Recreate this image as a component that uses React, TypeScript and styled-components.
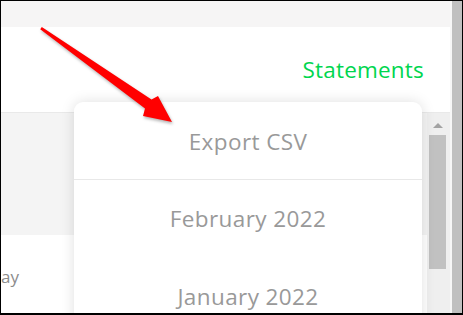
import React from "react";
import styled, { createGlobalStyle } from "styled-components";

const GlobalStyle = createGlobalStyle`
  html, body {
    margin: 0;
    padding: 0;
    background: #ffffff;
  }
  * {
    box-sizing: border-box;
  }
`;

const Frame = styled.div`
  position: relative;
  width: 463px;
  height: 315px;
  border: 1px solid #000;
  border-bottom-width: 2px;
  overflow: hidden;
  display: flex;
  font-family: "Open Sans", "Liberation Sans", sans-serif;
`;

const Main = styled.div`
  flex: 1;
  display: flex;
  flex-direction: column;
  min-width: 0;
`;

const PageScroll = styled.div`
  width: 12px;
  flex-shrink: 0;
  background: #c0c0c0;
  border-left: 2px solid #f7f7f7;
`;

const TopBand = styled.div`
  height: 26px;
  background: #f6f5f5;
  flex-shrink: 0;
`;

const Header = styled.div`
  height: 86px;
  flex-shrink: 0;
  display: flex;
  justify-content: flex-end;
  align-items: flex-start;
  padding: 28px 26px 0 0;
  border-bottom: 1px solid #e9e9e9;
`;

const HeaderLink = styled.span`
  color: #00d64f;
  font-size: 22.5px;
  line-height: 30px;
  letter-spacing: 0.2px;
`;

const Content = styled.div`
  flex: 1;
  display: flex;
  min-height: 0;
`;

const Table = styled.div`
  flex: 1;
  display: flex;
  flex-direction: column;
  overflow: hidden;
`;

const Band = styled.div`
  height: 122px;
  background: #f4f4f4;
  flex-shrink: 0;
`;

const Row = styled.div`
  padding-top: 31px;
  white-space: nowrap;
`;

const RowLabel = styled.span`
  display: inline-block;
  color: #8c8c8c;
  font-size: 17px;
  line-height: 22px;
`;

const Scrollbar = styled.div`
  width: 23px;
  flex-shrink: 0;
  background: #efefef;
  display: flex;
  flex-direction: column;
  align-items: center;
  padding: 10px 4px 0 2px;
`;

const ScrollArrow = styled.div`
  width: 0;
  height: 0;
  border-left: 5px solid transparent;
  border-right: 5px solid transparent;
  border-bottom: 5px solid #a3a3a3;
`;

const ScrollThumb = styled.div`
  margin-top: 7px;
  width: 17px;
  height: 134px;
  background: #c1c1c1;
`;

const Menu = styled.div`
  position: absolute;
  left: 73px;
  top: 101px;
  width: 348px;
  height: 240px;
  background: #fff;
  border-radius: 9px;
  box-shadow: 0 0 14px rgba(0, 0, 0, 0.13);
  display: flex;
  flex-direction: column;
`;

const MenuItem = styled.div<{ $divider?: boolean }>`
  height: 78px;
  flex-shrink: 0;
  display: flex;
  align-items: center;
  justify-content: center;
  padding-top: ${(p) => (p.$divider ? "2px" : "0")};
  color: #999999;
  font-size: 22.5px;
  line-height: 30px;
  letter-spacing: 0.4px;
  border-bottom: ${(p) => (p.$divider ? "1px solid #e8e8e8" : "none")};
`;

const Annotation = styled.svg`
  position: absolute;
  left: -1px;
  top: -1px;
  width: 463px;
  height: 315px;
  pointer-events: none;
  filter: drop-shadow(1px 2px 1.5px rgba(0, 0, 0, 0.3));
`;

const items = ["Export CSV", "February 2022", "January 2022"];

export default function App() {
  return (
    <>
      <GlobalStyle />
      <Frame>
        <Main>
          <TopBand />
          <Header>
            <HeaderLink>Statements</HeaderLink>
          </Header>
          <Content>
            <Table>
              <Band />
              <Row>
                <RowLabel>ay</RowLabel>
              </Row>
            </Table>
            <Scrollbar>
              <ScrollArrow />
              <ScrollThumb />
            </Scrollbar>
          </Content>
        </Main>
        <PageScroll />
        <Menu>
          {items.map((label, i) => (
            <MenuItem key={label} $divider={i === 0}>
              {label}
            </MenuItem>
          ))}
        </Menu>
        <Annotation viewBox="0 0 463 315">
          <polygon
            points="41.8,27 151.5,99.5 158,96 172,122 143,116 145,108.5 40.2,29.2"
            fill="#ff0000"
          />
        </Annotation>
      </Frame>
    </>
  );
}
